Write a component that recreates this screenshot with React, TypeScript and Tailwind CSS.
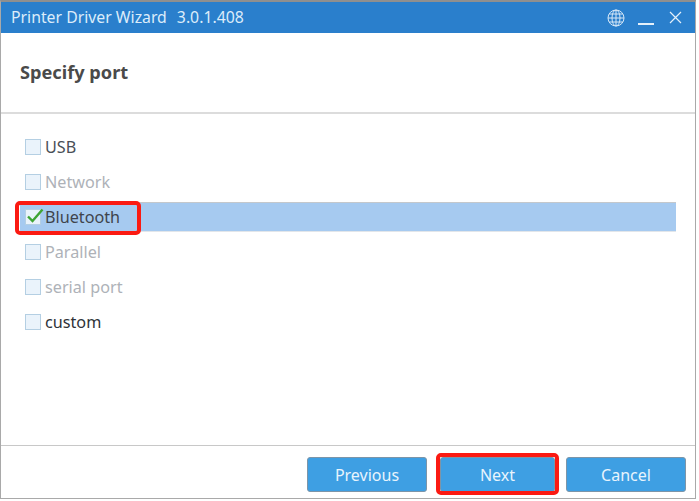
const font = { fontFamily: '"Noto Sans", "Open Sans", sans-serif' };

function Box({ checked }: { checked?: boolean }) {
  return (
    <span className="relative w-4 h-4 shrink-0 border border-[#b4cfe3] bg-[#eaf3fb]">
      {checked && (
        <svg className="absolute left-0 top-[-4px]" width="19" height="18" viewBox="0 0 19 18" fill="none">
          <path d="M2 10.5 L6.5 15 L16.5 3.5" stroke="#3fa535" strokeWidth="2.4" />
        </svg>
      )}
    </span>
  );
}

function Row({ label, color, checked, selected }: { label: string; color: string; checked?: boolean; selected?: boolean }) {
  return (
    <div className="relative h-[35px] pt-[2px]">
      <div className={`h-[30px] w-[656px] flex items-center gap-1 pl-[5px] ${selected ? "bg-[#a6caf0] border-y border-t-[#c4c8cc] border-b-[#e2e6ea]" : ""}`}>
        <Box checked={checked} />
        <span className={`text-[16.2px] leading-none ${color}`}>{label}</span>
      </div>
      {selected && <div className="absolute left-[-5px] top-[1px] w-[126px] h-[34px] border-[4px] border-[#fb1a12] rounded-[5px]" />}
    </div>
  );
}

function Btn({ label, highlight, w }: { label: string; highlight?: boolean; w: string }) {
  return (
    <div className="relative">
      <button className={`block ${w} h-[35px] rounded-[3px] border border-[#7d95a8] bg-[#3e9fe3] text-[#e8f4fd] text-[16px] leading-none`}>
        {label}
      </button>
      {highlight && <div className="absolute left-[-4px] right-[-4px] top-[-4px] bottom-[-3px] border-[4px] border-[#fb1a12] rounded-[5px]" />}
    </div>
  );
}

export default function App() {
  return (
    <div className="w-[699px] h-[501px] bg-white overflow-hidden" style={font}>
      <div className="w-[696px] h-[499px] border-l border-r border-b border-t-2 border-[#a9a9a9] border-t-[#8f8f8f] flex flex-col">
        <div className="h-[31px] shrink-0 bg-[#2a7fcc] flex items-center pl-[10px] pr-[13px] text-[#dcecfa]">
          <span className="text-[15.8px] leading-none">Printer Driver Wizard</span>
          <span className="text-[15.8px] leading-none ml-[10px]">3.0.1.408</span>
          <div className="ml-auto flex items-center">
            <svg width="18" height="18" viewBox="0 0 18 18" fill="none" stroke="#d5e7f7" strokeWidth="1">
              <circle cx="9" cy="9" r="8" />
              <ellipse cx="9" cy="9" rx="4" ry="8" />
              <path d="M9 1v16M1 9h16M2.2 5h13.6M2.2 13h13.6" />
            </svg>
            <span className="w-4 h-[1.5px] bg-[#e4f0fa] ml-[13px] mt-[13px]" />
            <svg className="ml-[15px]" width="13" height="13" viewBox="0 0 13 13" fill="none" stroke="#e4f0fa" strokeWidth="1.2">
              <path d="M1 1l11 11M12 1L1 12" />
            </svg>
          </div>
        </div>
        <div className="h-[79px] shrink-0 flex items-center pl-[19px]">
          <span className="text-[18.2px] font-bold leading-none text-[#4a4a4a] mt-[-1px]">Specify port</span>
        </div>
        <div className="h-[334px] shrink-0 border-t-2 border-b border-[#dcdcdc] border-b-[#c8c8c8] pl-[19px] pt-[16px]">
          <Row label="USB" color="text-[#4a4f57]" />
          <Row label="Network" color="text-[#aeb2b8]" />
          <Row label="Bluetooth" color="text-[#3f444c]" checked selected />
          <Row label="Parallel" color="text-[#aeb2b8]" />
          <Row label="serial port" color="text-[#aeb2b8]" />
          <Row label="custom" color="text-[#2e3238]" />
        </div>
        <div className="flex-1 flex items-start justify-end pr-[9px] pt-[11px]">
          <Btn label="Previous" w="w-[120px]" />
          <div className="ml-[13px]"><Btn label="Next" w="w-[115px]" highlight /></div>
          <div className="ml-[11px]"><Btn label="Cancel" w="w-[120px]" /></div>
        </div>
      </div>
    </div>
  );
}
